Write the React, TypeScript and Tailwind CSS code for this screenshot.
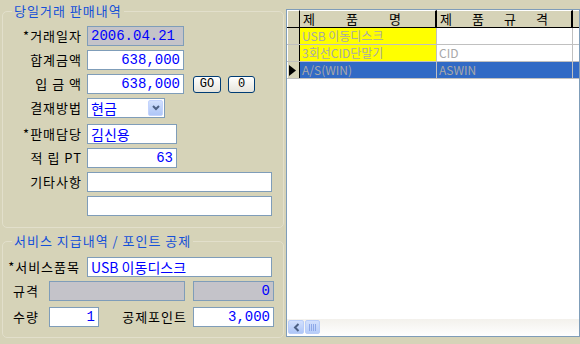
import React from "react";

const KR = { fontFamily: '"Noto Sans CJK KR", "Noto Sans", sans-serif' };
const MONO = { fontFamily: '"Liberation Mono", "Noto Sans CJK KR", monospace' };

const Label = ({ text, w = "w-[80px]" }: { text: string; w?: string }) => (
    <div className={`${w} shrink-0 text-right text-[13px] leading-[20px] text-black tracking-[1px] pr-[1px] whitespace-pre`} style={KR}>
        {text}
    </div>
);

interface BoxProps {
    value?: string;
    w: string;
    gray?: boolean;
    right?: boolean;
    kr?: boolean;
}

const Box = ({ value = "", w, gray, right, kr }: BoxProps) => (
    <div
        className={`${w} h-[20px] shrink-0 border border-[#7f9db9] px-[3px] text-[14px] leading-[18px] text-[#0000ff] whitespace-pre overflow-hidden ${gray ? "bg-[#c4c3c9]" : "bg-white"} ${right ? "text-right" : "text-left"}`}
        style={kr ? KR : MONO}
    >
        {value}
    </div>
);

const XpButton = ({ text, w }: { text: string; w: string }) => (
    <div
        className={`${w} h-[17px] rounded-[3px] border border-[#003c74] bg-gradient-to-b from-white to-[#e6e4dc] text-[12px] leading-[15px] text-center text-black`}
        style={MONO}
    >
        {text}
    </div>
);

const rows = [
    { name: "USB 이동디스크", spec: "", selected: false },
    { name: "3회선CID단말기", spec: "CID", selected: false },
    { name: "A/S(WIN)", spec: "ASWIN", selected: true },
];

export default function App() {
    return (
        <div className="w-[580px] h-[344px] bg-[#d6d3b8] flex overflow-hidden" style={KR}>
            {/* left form */}
            <div className="w-[286px] shrink-0 flex flex-col">
                <fieldset className="mx-[2px] mt-[4px] h-[224px] rounded-[5px] border border-[#e2dfcb] pl-0 pr-0">
                    <legend className="ml-[9px] px-[2px] text-[13px] leading-[14px] text-[#1450d8] tracking-[1px]">당일거래 판매내역</legend>
                    <div className="flex flex-col pt-[8px]">
                        <div className="flex items-center gap-[4px]">
                            <Label text="*거래일자" />
                            <Box w="w-[97px]" gray value="2006.04.21" />
                        </div>
                        <div className="flex items-center gap-[4px] mt-[4px]">
                            <Label text="합계금액" />
                            <Box w="w-[97px]" right value="638,000" />
                        </div>
                        <div className="flex items-center gap-[4px] mt-[4px]">
                            <Label text="입 금 액" />
                            <Box w="w-[97px]" right value="638,000" />
                            <div className="ml-[5px] flex gap-[7px]">
                                <XpButton text="GO" w="w-[28px]" />
                                <XpButton text="0" w="w-[27px]" />
                            </div>
                        </div>
                        <div className="flex items-center gap-[4px] mt-[4px]">
                            <Label text="결재방법" />
                            <div className="w-[78px] h-[20px] border border-[#7f9db9] bg-white flex items-stretch">
                                <div className="flex-1 pl-[3px] text-[14px] leading-[18px] text-[#0000ff]">현금</div>
                                <div className="w-[15px] m-[1px] rounded-[2px] bg-gradient-to-b from-[#d2e0fd] to-[#aec6f7] border border-[#c3d3fd] flex items-center justify-center">
                                    <svg width="8" height="6" viewBox="0 0 8 6">
                                        <path d="M1 1 L4 4 L7 1" fill="none" stroke="#4d6185" strokeWidth="2" />
                                    </svg>
                                </div>
                            </div>
                        </div>
                        <div className="flex items-center gap-[4px] mt-[6px]">
                            <Label text="*판매담당" />
                            <Box w="w-[90px]" kr value="김신용" />
                        </div>
                        <div className="flex items-center gap-[4px] mt-[4px]">
                            <Label text="적 립 PT" />
                            <Box w="w-[90px]" right value="63" />
                        </div>
                        <div className="flex items-center gap-[4px] mt-[4px]">
                            <Label text="기타사항" />
                            <Box w="w-[185px]" />
                        </div>
                        <div className="flex items-center gap-[4px] mt-[4px]">
                            <div className="w-[80px]" />
                            <Box w="w-[185px]" />
                        </div>
                    </div>
                </fieldset>

                <fieldset className="mx-[2px] mt-[6px] h-[104px] rounded-[5px] border border-[#e2dfcb]">
                    <legend className="ml-[9px] px-[2px] text-[13px] leading-[14px] text-[#1450d8] tracking-[1px]">서비스 지급내역 / 포인트 공제</legend>
                    <div className="flex flex-col pt-[9px]">
                        <div className="flex items-center gap-[6px]">
                            <Label text="*서비스품목" w="w-[78px]" />
                            <Box w="w-[185px]" kr value="USB 이동디스크" />
                        </div>
                        <div className="flex items-center mt-[4px]">
                            <div className="w-[46px] pl-[10px] text-[13px] leading-[20px] tracking-[1px]">규격</div>
                            <Box w="w-[136px]" gray />
                            <div className="w-[8px]" />
                            <Box w="w-[81px]" gray right value="0" />
                        </div>
                        <div className="flex items-center mt-[6px]">
                            <div className="w-[46px] pl-[10px] text-[13px] leading-[20px] tracking-[1px]">수량</div>
                            <Box w="w-[50px]" right value="1" />
                            <div className="w-[94px] text-right pr-[6px] text-[13px] leading-[20px] tracking-[1px]">공제포인트</div>
                            <Box w="w-[81px]" right value="3,000" />
                        </div>
                    </div>
                </fieldset>
            </div>

            {/* right grid */}
            <div className="flex-1 mt-[9px] mb-[7px] border border-[#7f9db9] bg-white flex flex-col">
                {/* header */}
                <div className="flex h-[18px] bg-[#d6d3b8] border-b border-black">
                    <div className="w-[13px] shrink-0 border-r border-black border-l border-t border-l-white border-t-white" />
                    <div className="w-[137px] shrink-0 border-r-2 border-black border-t border-t-white flex justify-between px-[3px] text-[13px] leading-[16px] text-black">
                        <span>제</span><span>품</span><span>명</span><span />
                    </div>
                    <div className="w-[136px] shrink-0 border-r-2 border-black border-t border-t-white flex justify-between px-[3px] text-[13px] leading-[16px] text-black">
                        <span>제</span><span>품</span><span>규</span><span>격</span><span />
                    </div>
                    <div className="flex-1 border-t border-t-white" />
                </div>
                {rows.map((r, i) => (
                    <div key={i} className="flex h-[17px] border-b border-[#c0c0c0]">
                        <div className="w-[13px] shrink-0 bg-[#d6d3b8] border-r border-black border-l border-l-white flex items-center justify-start">
                            {r.selected && (
                                <svg width="9" height="11" viewBox="0 0 9 11">
                                    <path d="M1 0 L8 5.5 L1 11 Z" fill="#000" />
                                </svg>
                            )}
                        </div>
                        <div className={`w-[137px] shrink-0 border-r border-[#c0c0c0] px-[2px] text-[12px] leading-[16px] text-[#a8a8a8] whitespace-pre ${r.selected ? "bg-[#316ac5]" : "bg-[#ffff00]"}`}>
                            {r.name}
                        </div>
                        <div className={`w-[136px] shrink-0 border-r border-[#c0c0c0] px-[2px] text-[12px] leading-[16px] text-[#a8a8a8] ${r.selected ? "bg-[#316ac5]" : "bg-white"}`}>
                            {r.spec}
                        </div>
                        <div className={`flex-1 ${r.selected ? "bg-[#316ac5]" : "bg-white"}`} />
                    </div>
                ))}
                <div className="flex-1" />
                {/* horizontal scrollbar */}
                <div className="h-[17px] bg-gradient-to-b from-[#f3f1ec] to-[#fefefe] flex items-stretch border-b border-[#ffffff]">
                    <div className="w-[16px] m-[1px] rounded-[2px] bg-gradient-to-b from-[#d2e0fd] to-[#aec6f7] border border-[#b9cdf8] flex items-center justify-center">
                        <svg width="7" height="9" viewBox="0 0 7 9">
                            <path d="M5.5 1 L2 4.5 L5.5 8" fill="none" stroke="#4d6185" strokeWidth="2" />
                        </svg>
                    </div>
                    <div className="w-[15px] my-[1px] rounded-[2px] bg-gradient-to-b from-[#d2e0fd] to-[#b7cdf8] border border-[#b9cdf8] flex items-center justify-center gap-[1px]">
                        <span className="w-[1px] h-[7px] bg-[#8ea8e8]" />
                        <span className="w-[1px] h-[7px] bg-[#8ea8e8]" />
                        <span className="w-[1px] h-[7px] bg-[#8ea8e8]" />
                        <span className="w-[1px] h-[7px] bg-[#8ea8e8]" />
                    </div>
                </div>
            </div>
        </div>
    );
}
